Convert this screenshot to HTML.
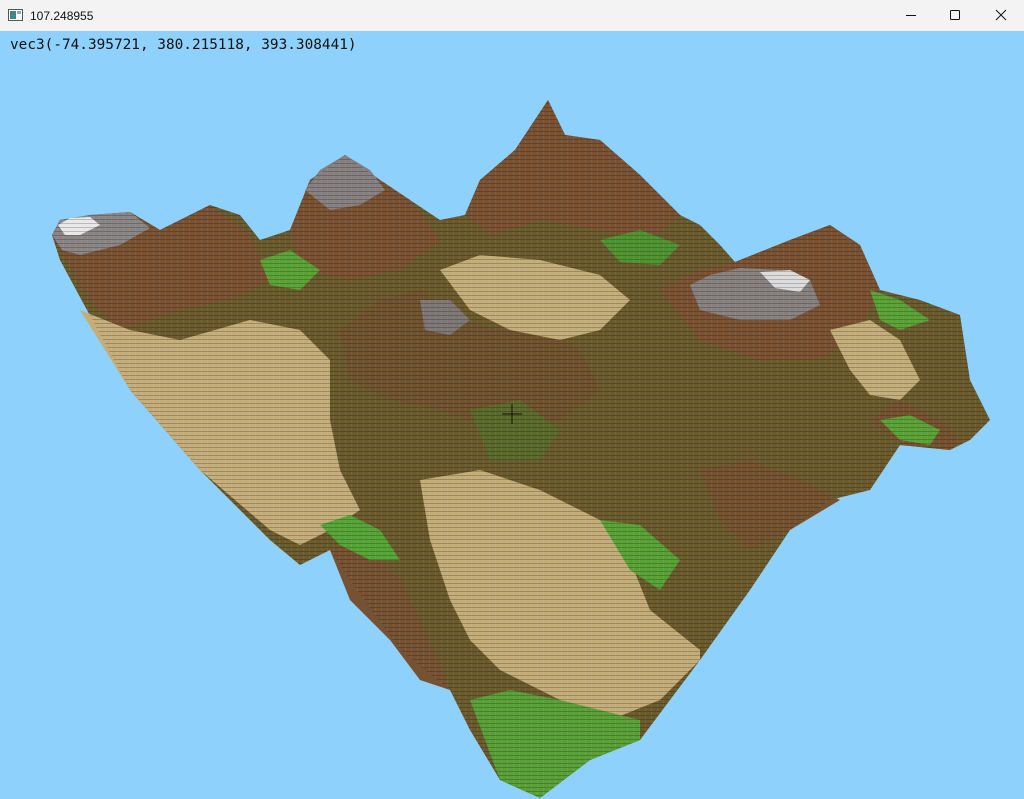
<!DOCTYPE html>
<html><head><meta charset="utf-8"><style>
html,body{margin:0;padding:0;width:1024px;height:799px;overflow:hidden;background:#8fd1fd}
#tb{position:absolute;left:0;top:0;width:1024px;height:31px;background:#f3f3f3;font-family:"Liberation Sans",sans-serif;font-size:12px;color:#111}
#tb .t{position:absolute;left:30px;top:9px}
#txt{position:absolute;left:10px;top:37px;font-family:"DejaVu Sans Mono","Liberation Mono",monospace;font-size:14.4px;color:#111}
svg{position:absolute;left:0;top:0}
</style></head><body>
<svg width="1024" height="799" viewBox="0 0 1024 799">
<defs>
<pattern id="vx" width="6" height="4" patternUnits="userSpaceOnUse"><rect x="0" y="3" width="6" height="1" fill="#000" opacity="0.2"/><rect x="3" y="0" width="1" height="3" fill="#fff" opacity="0.07"/></pattern>
</defs>
<polygon fill="#6a5a2c" points="52,235 60,220 90,215 130,212 160,230 210,205 240,215 260,240 290,230 310,180 345,155 380,180 410,200 440,220 465,215 480,180 515,150 548,100 565,135 600,140 640,175 680,215 700,225 720,245 735,262 790,240 830,225 860,245 880,290 920,300 960,315 970,380 990,420 970,440 950,450 900,445 870,490 830,500 790,530 750,590 700,660 640,740 590,760 540,798 500,780 470,730 450,690 400,650 350,580 330,550 300,565 270,540 200,470 130,390 60,260"/>
<polygon fill="#7a5232" points="52,235 60,220 130,212 160,230 210,205 250,235 270,280 230,300 180,310 120,330 90,300"/>
<polygon fill="#7a5232" points="290,230 310,180 345,155 380,180 410,200 440,240 400,270 350,280 300,270"/>
<polygon fill="#7a5232" points="465,215 480,180 515,150 548,100 565,135 600,140 640,175 680,215 650,240 600,230 540,220 490,235"/>
<polygon fill="#7a5232" points="660,290 700,270 735,262 790,240 830,225 860,245 880,290 860,330 820,360 760,360 700,340"/>
<polygon fill="#70532e" points="340,330 380,300 420,290 460,320 500,330 540,325 580,350 600,390 560,420 500,430 440,410 390,400 350,380"/>
<polygon fill="#765232" points="330,550 360,540 400,580 420,620 450,690 420,680 390,640 350,600"/>
<polygon fill="#74522f" points="700,470 750,460 800,480 840,500 790,530 750,550 720,520"/>
<polygon fill="#74522f" points="870,420 900,400 940,420 960,440 950,450 900,445"/>
<polygon fill="#c4ad78" points="80,310 130,330 180,340 250,320 300,330 330,360 330,420 340,470 360,510 330,530 300,545 270,530 200,470 130,390"/>
<polygon fill="#c3ac77" points="420,480 480,470 540,490 600,520 630,560 650,610 700,650 700,660 660,700 610,720 560,700 500,670 470,640 450,600 430,540"/>
<polygon fill="#c3ad78" points="440,270 480,255 540,260 600,275 630,300 600,330 560,340 510,330 470,310"/>
<polygon fill="#c3ad78" points="830,330 870,320 900,340 920,380 900,400 870,395 850,370"/>
<polygon fill="#58a036" points="470,700 510,690 560,700 600,710 640,720 640,740 590,760 540,798 500,780"/>
<polygon fill="#55a536" points="320,525 350,515 380,530 400,560 370,560 340,545"/>
<polygon fill="#58a235" points="600,520 640,525 680,560 660,590 630,570"/>
<polygon fill="#5aa236" points="870,290 900,300 930,320 900,330 880,320"/>
<polygon fill="#5aa236" points="880,420 910,415 940,430 930,445 900,440"/>
<polygon fill="#5aa236" points="260,260 290,250 320,270 300,290 270,285"/>
<polygon fill="#5a6a2a" points="470,410 520,400 560,430 540,460 490,460"/>
<polygon fill="#4f9331" points="600,240 640,230 680,245 660,265 620,262"/>
<polygon fill="#8a8585" points="52,235 60,220 90,215 130,212 150,228 120,245 80,255 62,250"/>
<polygon fill="#e8e8e8" points="58,225 70,218 90,217 100,225 80,235 65,235"/>
<polygon fill="#85807f" points="305,190 320,170 345,155 370,170 385,190 360,205 330,210"/>
<polygon fill="#86807e" points="690,285 710,275 740,268 780,270 810,280 820,305 790,320 740,320 700,310"/>
<polygon fill="#dcdcdc" points="760,272 790,270 810,280 800,292 775,288"/>
<polygon fill="#7d7776" points="420,300 450,300 470,320 450,335 425,330"/>
<polygon fill="url(#vx)" points="52,235 60,220 90,215 130,212 160,230 210,205 240,215 260,240 290,230 310,180 345,155 380,180 410,200 440,220 465,215 480,180 515,150 548,100 565,135 600,140 640,175 680,215 700,225 720,245 735,262 790,240 830,225 860,245 880,290 920,300 960,315 970,380 990,420 970,440 950,450 900,445 870,490 830,500 790,530 750,590 700,660 640,740 590,760 540,798 500,780 470,730 450,690 400,650 350,580 330,550 300,565 270,540 200,470 130,390 60,260"/>
<line x1="502" y1="414" x2="522" y2="414" stroke="#111" stroke-width="1"/>
<line x1="512" y1="404" x2="512" y2="424" stroke="#111" stroke-width="1"/>
</svg>
<div id="tb">
<svg width="16" height="14" style="left:8px;top:9px"><rect x="0.5" y="0.5" width="14" height="11" fill="#fff" stroke="#555"/><rect x="2" y="2" width="6" height="8" fill="#3a8a8a"/><rect x="9" y="2" width="4" height="3" fill="#8ab"/></svg>
<span class="t">107.248955</span>
<svg width="140" height="31" style="left:884px;top:0"><line x1="22" y1="15.5" x2="32" y2="15.5" stroke="#111"/><rect x="66.5" y="10.5" width="9" height="9" fill="none" stroke="#111" rx="1"/><path d="M112 10 L122 20 M122 10 L112 20" stroke="#111"/></svg>
</div>
<div id="txt">vec3(-74.395721, 380.215118, 393.308441)</div>
</body></html>
